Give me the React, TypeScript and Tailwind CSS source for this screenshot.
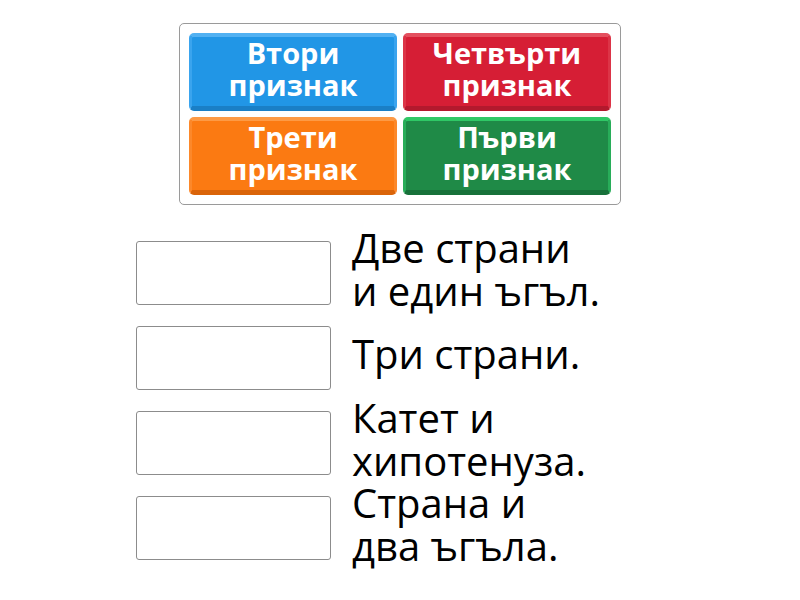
const tiles = [
  { text: ["Втори", "признак"], cls: "bg-[#2196e6] border-t-[#52b1f2] border-x-[#3aa4ee] border-b-[#1a7fc6]" },
  { text: ["Четвърти", "признак"], cls: "bg-[#d61e35] border-t-[#e4505f] border-x-[#dc3447] border-b-[#b3192d]" },
  { text: ["Трети", "признак"], cls: "bg-[#fb7a12] border-t-[#fd9a45] border-x-[#fc882a] border-b-[#da6409]" },
  { text: ["Първи", "признак"], cls: "bg-[#1f8a47] border-t-[#2fc866] border-x-[#28ad59] border-b-[#17713a]" },
];

const rows = [
  ["Две страни", "и един ъгъл."],
  ["Три страни."],
  ["Катет и", "хипотенуза."],
  ["Страна и", "два ъгъла."],
];

export default function App() {
  return (
    <div className="w-[800px] h-[600px] bg-white flex flex-col items-center font-['Open_Sans',sans-serif]">
      <div className="mt-[23px] w-[442px] border border-[#9a9a9a] rounded-[5px] px-[9px] py-[9px] grid grid-cols-2 gap-x-[6px] gap-y-[6px]">
        {tiles.map((t, i) => (
          <div
            key={i}
            className={`h-[78px] pb-[6px] rounded-[5px] border-t-[4px] border-x-[3px] border-b-[5px] flex flex-col items-center justify-center text-white font-bold text-[29px] leading-[32px] ${t.cls}`}
          >
            {t.text.map((l, j) => (
              <span key={j}>{l}</span>
            ))}
          </div>
        ))}
      </div>
      <div className="mt-[36px] flex flex-col gap-[21px] w-[528px]">
        {rows.map((r, i) => (
          <div key={i} className="h-[64px] flex items-center gap-[21px]">
            <div className="w-[195px] h-[64px] shrink-0 border border-[#8c8c8c] rounded-[3px] bg-white" />
            <div className="pb-[9px] text-[40px] leading-[43px] text-black whitespace-nowrap">
              {r.map((l, j) => (
                <div key={j}>{l}</div>
              ))}
            </div>
          </div>
        ))}
      </div>
    </div>
  );
}
